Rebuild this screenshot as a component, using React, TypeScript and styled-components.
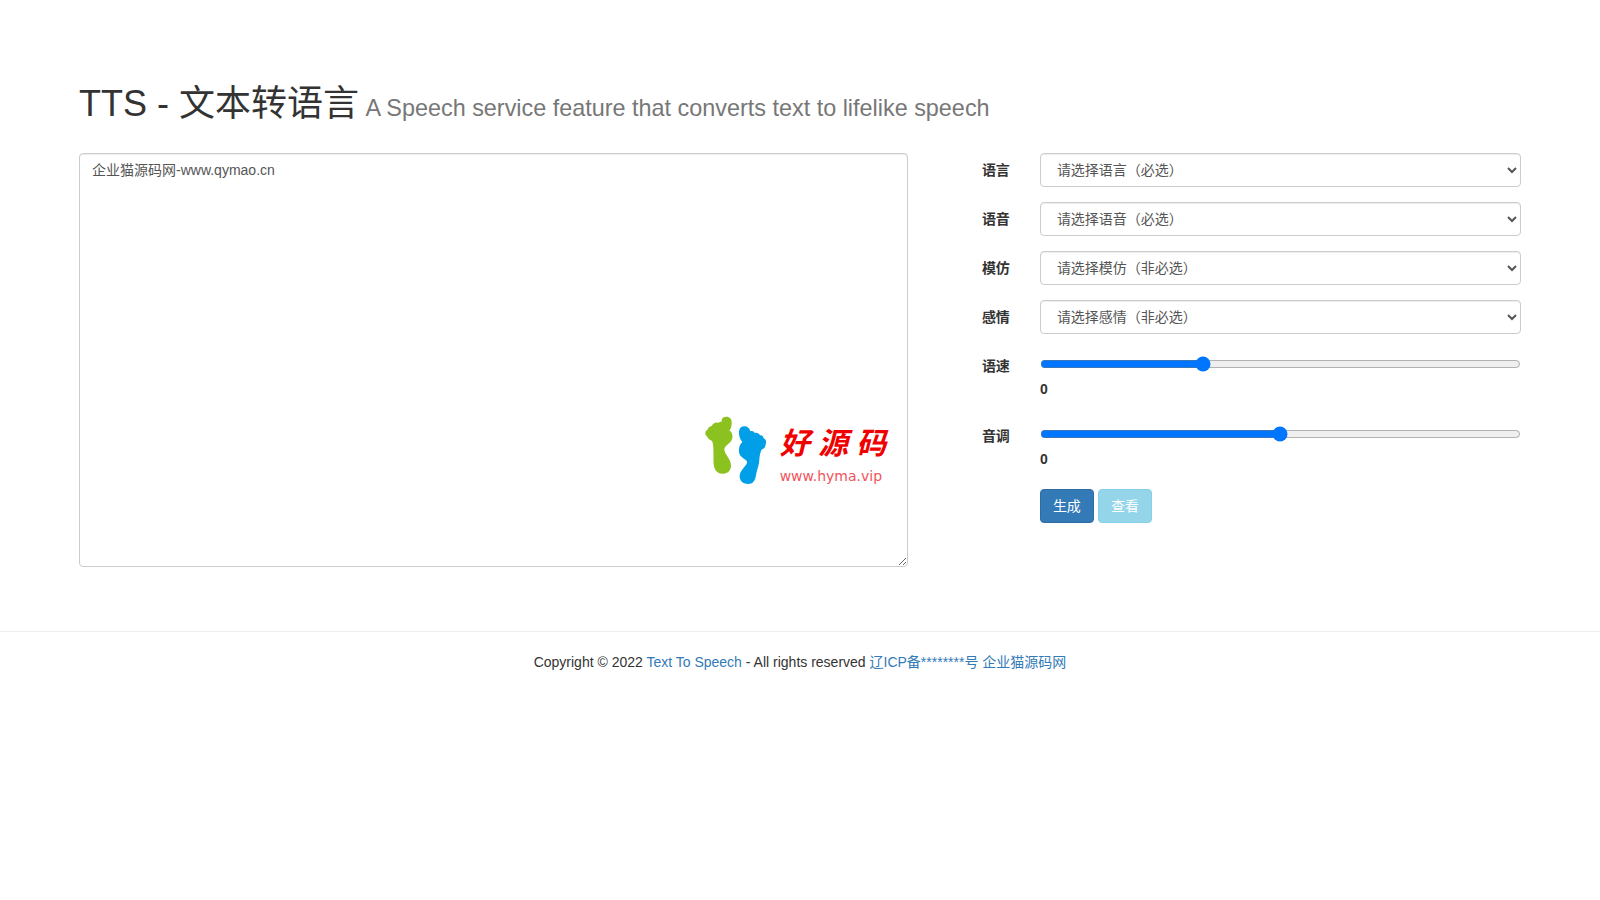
import React, { useState } from "react";
import styled, { createGlobalStyle, css } from "styled-components";

const GlobalStyle = createGlobalStyle`
  *, *::before, *::after { box-sizing: border-box; }
  body {
    margin: 0;
    background: #fff;
    color: #333;
    font-family: "Liberation Sans", "Noto Sans CJK SC", sans-serif;
    font-size: 14px;
    line-height: 20px;
  }
`;

const Container = styled.main`
  padding: 84px 79px 64px;
`;

const Title = styled.h1`
  margin: 0 0 29px;
  font-size: 36px;
  font-weight: 400;
  line-height: 40px;
`;

const Subtitle = styled.small`
  font-size: 65%;
  line-height: 1;
  color: #777;
`;

const Columns = styled.div`
  display: grid;
  grid-template-columns: 7fr 5fr;
  margin: 0 -15px;
  align-items: start;
`;

const TextPane = styled.div`
  position: relative;
  display: flex;
  margin: 0 15px;
`;

const fieldLook = css`
  width: 100%;
  padding: 6px 12px;
  border: 1px solid #ccc;
  border-radius: 4px;
  background: #fff;
  color: #555;
  font: inherit;
  box-shadow: inset 0 1px 1px rgba(0, 0, 0, 0.075);
`;

const TextBox = styled.textarea`
  ${fieldLook}
  height: 414px;
  resize: vertical;
`;

const Watermark = styled.div`
  position: absolute;
  right: 20px;
  bottom: 81px;
  display: flex;
  align-items: flex-end;
  gap: 13px;
  pointer-events: none;
`;

const Feet = styled.svg`
  width: 62px;
  height: 70px;
`;

const Brand = styled.div`
  display: grid;
  row-gap: 4px;
  width: 108px;
  white-space: nowrap;
`;

const BrandName = styled.div`
  color: #f00000;
  font-size: 30px;
  font-weight: 700;
  font-style: italic;
  line-height: 36px;
`;

const BrandUrl = styled.div`
  color: #f0545c;
  font-family: "DejaVu Sans", sans-serif;
  font-size: 14px;
  line-height: 20px;
`;

const Form = styled.form`
  display: grid;
  grid-template-columns: 1fr 5fr;
  row-gap: 15px;
`;

const FieldLabel = styled.label`
  padding: 7px 15px 0;
  text-align: right;
  font-weight: 700;
`;

const Control = styled.div`
  grid-column: 2;
  padding: 0 15px;
`;

const Select = styled.select`
  ${fieldLook}
  display: block;
  height: 34px;
`;

const SliderStack = styled.div`
  display: flex;
  flex-direction: column;
  gap: 7px;
  padding: 7px 0 5px;
`;

const Slider = styled.input`
  width: 100%;
  height: 16px;
  margin: 0;
`;

const SliderValue = styled.output`
  font-weight: 700;
`;

const Actions = styled.div`
  display: flex;
  gap: 4px;
`;

const Button = styled.button<{ $fill: string; $edge: string }>`
  padding: 6px 12px;
  border: 1px solid ${(p) => p.$edge};
  border-radius: 4px;
  background: ${(p) => p.$fill};
  color: #fff;
  font: inherit;
  cursor: pointer;

  &:disabled {
    opacity: 0.65;
    cursor: not-allowed;
  }
`;

const Footer = styled.footer`
  padding: 20px;
  border-top: 1px solid #eee;
  text-align: center;
`;

const Link = styled.a`
  color: #337ab7;
  text-decoration: none;
`;

const selects = [
  { id: "language", label: "语言", hint: "请选择语言（必选）" },
  { id: "voice", label: "语音", hint: "请选择语音（必选）" },
  { id: "role", label: "模仿", hint: "请选择模仿（非必选）" },
  { id: "style", label: "感情", hint: "请选择感情（非必选）" },
];

function SliderField(props: { id: string; label: string; min: number; max: number }) {
  const [value, setValue] = useState(0);
  return (
    <>
      <FieldLabel htmlFor={props.id}>{props.label}</FieldLabel>
      <Control>
        <SliderStack>
          <Slider
            id={props.id}
            type="range"
            min={props.min}
            max={props.max}
            value={value}
            onChange={(e) => setValue(Number(e.target.value))}
          />
          <SliderValue htmlFor={props.id}>{value}</SliderValue>
        </SliderStack>
      </Control>
    </>
  );
}

export default function App() {
  return (
    <>
      <GlobalStyle />
      <Container>
        <Title>
          TTS - 文本转语言
          <Subtitle> A Speech service feature that converts text to lifelike speech</Subtitle>
        </Title>
        <Columns>
          <TextPane>
            <TextBox aria-label="文本" defaultValue="企业猫源码网-www.qymao.cn" />
            <Watermark>
              <Feet viewBox="0 0 186 210" aria-hidden="true">
                <path
                  fill="#8cc220"
                  d="M21 75 C14 72 8 68 6 61 C-1 57 -1 45 7 42 C9 35 14 31 20 30 C24 22 33 17 40 21 C44 17 47 17 50 18 C48 7 55 2 64 2 C76 2 81 11 80 22 C80 33 77 40 73 43 C81 49 84 58 82 66 C80 82 59 88 58 99 C57 114 79 130 78 149 C77 166 66 173 52 173 C36 173 27 160 26 143 C24 125 28 88 21 75 Z"
                />
                <path
                  fill="#009fe8"
                  d="M112 78 C105 70 101 58 102 47 C103 36 109 31 118 31 C128 31 134 37 136 46 C142 43 147 46 149 51 C156 49 162 52 165 58 C171 57 175 61 176 67 C183 70 185 78 182 84 C182 93 177 99 171 100 C164 109 164 125 162 141 C160 153 155 165 153 177 C151 194 144 204 129 204 C113 204 104 194 104 181 C104 163 123 151 126 140 C128 129 104 127 102 108 C101 95 104 85 112 78 Z"
                />
              </Feet>
              <Brand>
                <BrandName>好 源 码</BrandName>
                <BrandUrl>www.hyma.vip</BrandUrl>
              </Brand>
            </Watermark>
          </TextPane>
          <Form onSubmit={(e) => e.preventDefault()}>
            {selects.map((s) => (
              <React.Fragment key={s.id}>
                <FieldLabel htmlFor={s.id}>{s.label}</FieldLabel>
                <Control>
                  <Select id={s.id}>
                    <option>{s.hint}</option>
                  </Select>
                </Control>
              </React.Fragment>
            ))}
            <SliderField id="rate" label="语速" min={-100} max={200} />
            <SliderField id="pitch" label="音调" min={-100} max={100} />
            <Control>
              <Actions>
                <Button type="submit" $fill="#337ab7" $edge="#2e6da4">
                  生成
                </Button>
                <Button type="button" disabled $fill="#5bc0de" $edge="#46b8da">
                  查看
                </Button>
              </Actions>
            </Control>
          </Form>
        </Columns>
      </Container>
      <Footer>
        Copyright © 2022 <Link href="#">Text To Speech</Link> - All rights reserved{" "}
        <Link href="#">辽ICP备********号</Link> <Link href="#">企业猫源码网</Link>
      </Footer>
    </>
  );
}
